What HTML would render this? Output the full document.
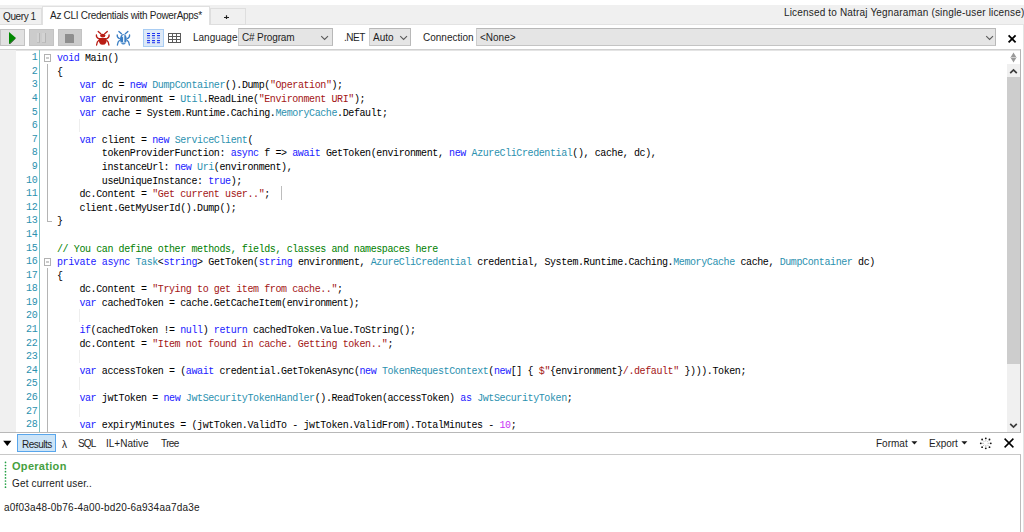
<!DOCTYPE html>
<html><head><meta charset="utf-8">
<style>
*{box-sizing:border-box;margin:0;padding:0}
html,body{width:1024px;height:532px;overflow:hidden;background:#fff;position:relative;font-family:"Liberation Sans",sans-serif;color:#000}
.a{position:absolute}
.ui{font-family:"Liberation Sans",sans-serif;font-size:10px;white-space:pre;line-height:12px;color:#1e1e1e}
#code{position:absolute;left:57px;top:52.2px;font-family:"Liberation Mono",monospace;font-size:10px;letter-spacing:-0.4px;line-height:13.6px;white-space:pre;color:#000}
#nums{position:absolute;left:16.3px;top:51.2px;width:21px;text-align:right;font-family:"Liberation Mono",monospace;font-size:10px;letter-spacing:-0.4px;line-height:13.6px;white-space:pre;color:#2b91af}
.k{color:#1a1aff}.t{color:#2b91af}.s{color:#a31515}.c{color:#008000}.n{color:#c832f5}
</style></head><body>
<!-- tab strip -->
<div class="a" style="left:0;top:5px;width:1024px;height:20px;background:#f0f0f0"></div>
<div class="a" style="left:0;top:24px;width:1024px;height:1px;background:#e3e3e3"></div>
<div class="a" style="left:-1px;top:8px;width:43px;height:17px;background:#f0f0f0;border:1px solid #dedede"></div>
<div class="a ui" style="left:3px;top:11px;letter-spacing:-0.4px">Query 1</div>
<div class="a" style="left:42px;top:6px;width:168px;height:19px;background:#fff;border:1px solid #e0e0e0;border-bottom:none"></div>
<div class="a ui" style="left:50px;top:10px;letter-spacing:-0.29px">Az CLI Credentials with PowerApps*</div>
<div class="a" style="left:210px;top:8px;width:36px;height:17px;background:#f0f0f0;border:1px solid #dedede"></div>
<svg class="a" style="left:223px;top:14px" width="7" height="6"><path d="M1 3.5H6M3.5 1.2V5" stroke="#202020" stroke-width="1.2"/></svg>
<div class="a ui" style="left:784px;top:7px;letter-spacing:0.17px">Licensed to Natraj Yegnaraman (single-user license)</div>

<!-- toolbar -->
<div class="a" style="left:0;top:29px;width:25px;height:17px;background:#e1e1e1;border:1px solid #c2c2c2"></div>
<svg class="a" style="left:9px;top:32px" width="8" height="12"><path d="M0 0 L7 6 L0 12Z" fill="#008800"/><path d="M0 12 L7 6 L6 7.2 L1 12Z" fill="#002800"/></svg>
<div class="a" style="left:29px;top:29px;width:25px;height:17px;background:#cccccc;border:1px solid #c3c3c3"></div>
<div class="a" style="left:37px;top:33px;width:3px;height:10px;background:#d3d3d3;border-right:1px solid #b5b5b5;border-bottom:1px solid #bdbdbd"></div>
<div class="a" style="left:42px;top:33px;width:4px;height:10px;background:#d3d3d3;border-right:1px solid #b5b5b5;border-bottom:1px solid #bdbdbd"></div>
<div class="a" style="left:58px;top:29px;width:24px;height:17px;background:#cccccc;border:1px solid #c3c3c3"></div>
<svg class="a" style="left:65px;top:34px" width="9" height="9"><path d="M0 0H8L9 1V9H0Z" fill="#8e8e8e"/></svg>
<!-- bugs -->
<svg class="a" style="left:95px;top:30px" width="16" height="17" viewBox="0 0 16 17">
<g stroke="#b91d15" stroke-width="1.3" fill="none" stroke-linecap="round"><path d="M3.2 1.4 L5.8 3.8"/><path d="M12.3 1.4 L9.7 3.8"/><path d="M1.4 5 Q1.2 7.6 3.6 8.6"/><path d="M14.1 5 Q14.3 7.6 11.9 8.6"/><path d="M3.6 10.5 Q2 11.5 1.6 15"/><path d="M11.9 10.5 Q13.5 11.5 13.9 15"/></g>
<ellipse cx="7.75" cy="5.6" rx="2.65" ry="1.95" fill="#b91d15"/>
<path d="M3.8 7.9 H11.7 Q12.3 14.8 7.75 14.8 Q3.2 14.8 3.8 7.9Z" fill="#b91d15"/></svg>
<svg class="a" style="left:116px;top:30px" width="16" height="17" viewBox="0 0 16 17">
<g stroke="#3a7ec4" stroke-width="1.3" fill="none" stroke-linecap="round"><path d="M2.9 1.4 L5.5 3.8"/><path d="M11.9 1.4 L9.3 3.8"/><path d="M1.2 5 Q1 7.6 3.4 8.6"/><path d="M13.6 5 Q13.8 7.6 11.4 8.6"/><path d="M3.4 10.5 Q1.8 11.5 1.4 15"/><path d="M11.4 10.5 Q13 11.5 13.4 15"/></g>
<ellipse cx="7.4" cy="9.3" rx="3.4" ry="5.3" fill="#3a7ec4"/>
<path d="M6.3 6.6 L7.7 5.6 V12.2" stroke="#f0f6fc" stroke-width="1.3" fill="none"/><path d="M4.6 12.7 H10.2" stroke="#d0e2f4" stroke-width="0.8"/></svg>
<!-- grid buttons -->
<div class="a" style="left:143px;top:29px;width:21px;height:18px;background:#dde9f7;border:1px solid #a9cdf3"></div>
<svg class="a" style="left:147px;top:33px" width="14" height="11"><g fill="#2034f0"><rect x="0" y="0" width="3" height="1"/><rect x="5" y="0" width="3" height="1"/><rect x="10" y="0" width="3" height="1"/><rect x="0" y="2" width="3" height="1.2"/><rect x="5" y="2" width="3" height="1.2"/><rect x="10" y="2" width="3" height="1.2"/><rect x="0" y="7" width="3" height="1.2"/><rect x="5" y="7" width="3" height="1.2"/><rect x="10" y="7" width="3" height="1.2"/><rect x="0" y="9.2" width="3" height="1"/><rect x="5" y="9.2" width="3" height="1"/><rect x="10" y="9.2" width="3" height="1"/></g><g fill="#8595ee"><rect x="0" y="4.3" width="3" height="1.6"/><rect x="5" y="4.3" width="3" height="1.6"/><rect x="10" y="4.3" width="3" height="1.6"/></g></svg>
<svg class="a" style="left:168px;top:33px" width="13" height="10"><g fill="#5a5a5a"><rect x="0" y="0" width="13" height="1"/><rect x="0" y="3" width="13" height="1"/><rect x="0" y="6" width="13" height="1"/><rect x="0" y="9" width="13" height="1"/><rect x="0" y="0" width="1" height="10"/><rect x="4" y="0" width="1" height="10"/><rect x="8" y="0" width="1" height="10"/><rect x="12" y="0" width="1" height="10"/></g></svg>
<div class="a ui" style="left:193px;top:32px">Language</div>
<div class="a" style="left:238px;top:28px;width:95px;height:18px;background:#e5e5e5;border:1px solid #b8b8b8;border-left-color:#cdcdcd;border-bottom-color:#c4c4c4"></div>
<div class="a ui" style="left:242px;top:32px;letter-spacing:-0.15px">C# Program</div>
<svg class="a" style="left:320px;top:35px" width="10" height="6"><path d="M1.2 1.2 L4.6 4.5 L8 1.2" stroke="#5a5a5a" stroke-width="1.1" fill="none"/></svg>
<div class="a ui" style="left:344px;top:32px;letter-spacing:-0.5px">.NET</div>
<div class="a" style="left:369px;top:28px;width:42px;height:18px;background:#e5e5e5;border:1px solid #b8b8b8;border-left-color:#cdcdcd;border-bottom-color:#c4c4c4"></div>
<div class="a ui" style="left:373px;top:32px">Auto</div>
<svg class="a" style="left:399px;top:35px" width="10" height="6"><path d="M1.2 1.2 L4.6 4.5 L8 1.2" stroke="#5a5a5a" stroke-width="1.1" fill="none"/></svg>
<div class="a ui" style="left:423px;top:32px">Connection</div>
<div class="a" style="left:476px;top:28px;width:520px;height:18px;background:#e5e5e5;border:1px solid #b8b8b8;border-left-color:#cdcdcd;border-bottom-color:#c4c4c4"></div>
<div class="a ui" style="left:480px;top:32px">&lt;None&gt;</div>
<svg class="a" style="left:984.5px;top:35px" width="10" height="6"><path d="M1.2 1.2 L4.6 4.5 L8 1.2" stroke="#5a5a5a" stroke-width="1.1" fill="none"/></svg>
<svg class="a" style="left:1007px;top:34px" width="10" height="10"><path d="M1.6 1.4 L8.6 8.4 M8.6 1.4 L1.6 8.4" stroke="#000" stroke-width="1.8"/></svg>

<!-- editor -->
<div class="a" style="left:0;top:49px;width:1021px;height:384px;border-top:1px solid #d0d0d0;border-right:1px solid #b4b4b4;border-bottom:1px solid #b8b8b8"></div><div class="a" style="left:0;top:50px;width:1020px;height:1px;background:#e4e4e4"></div><div class="a" style="left:1023px;top:25px;width:1px;height:507px;background:#e4e4e4"></div>
<div class="a" style="left:0;top:50px;width:16px;height:382px;background:#f0f0f0"></div>
<div class="a" style="left:39px;top:50px;width:1px;height:382px;background:#7cc3c6"></div>
<div id="nums">1
2
3
4
5
6
7
8
9
10
11
12
13
14
15
16
17
18
19
20
21
22
23
24
25
26
27
28</div>
<!-- fold markers -->
<div class="a" style="left:44px;top:54px;width:7px;height:8px;border:1px solid #b2b2b2;background:#fff"></div>
<div class="a" style="left:46px;top:57px;width:3px;height:2px;background:#cccccc"></div>
<div class="a" style="left:47px;top:64px;width:1px;height:158px;background:#b4b4b4"></div>
<div class="a" style="left:47px;top:221px;width:5px;height:1px;background:#b4b4b4"></div>
<div class="a" style="left:44px;top:258px;width:7px;height:8px;border:1px solid #b2b2b2;background:#fff"></div>
<div class="a" style="left:46px;top:261px;width:3px;height:2px;background:#cccccc"></div>
<div class="a" style="left:47px;top:268px;width:1px;height:164px;background:#b4b4b4"></div>
<!-- indent guides on empty lines -->
<div class="a" style="left:79px;top:119px;width:1px;height:13px;background:#eeeeee"></div>
<div class="a" style="left:79px;top:309px;width:1px;height:13px;background:#eeeeee"></div>
<div class="a" style="left:79px;top:350px;width:1px;height:13px;background:#eeeeee"></div>
<div class="a" style="left:79px;top:377px;width:1px;height:13px;background:#eeeeee"></div>
<div class="a" style="left:79px;top:404px;width:1px;height:13px;background:#eeeeee"></div>
<div id="code"><span class="k">void</span> Main()
{
    <span class="k">var</span> dc = <span class="k">new</span> <span class="t">DumpContainer</span>().Dump(<span class="s">"Operation"</span>);
    <span class="k">var</span> environment = <span class="t">Util</span>.ReadLine(<span class="s">"Environment URI"</span>);
    <span class="k">var</span> cache = System.Runtime.Caching.<span class="t">MemoryCache</span>.Default;

    <span class="k">var</span> client = <span class="k">new</span> <span class="t">ServiceClient</span>(
        tokenProviderFunction: <span class="k">async</span> f =&gt; <span class="k">await</span> GetToken(environment, <span class="k">new</span> <span class="t">AzureCliCredential</span>(), cache, dc),
        instanceUrl: <span class="k">new</span> <span class="t">Uri</span>(environment),
        useUniqueInstance: <span class="k">true</span>);
    dc.Content = <span class="s">"Get current user.."</span>;
    client.GetMyUserId().Dump();
}

<span class="c">// You can define other methods, fields, classes and namespaces here</span>
<span class="k">private</span> <span class="k">async</span> <span class="t">Task</span>&lt;<span class="k">string</span>&gt; GetToken(<span class="k">string</span> environment, <span class="t">AzureCliCredential</span> credential, System.Runtime.Caching.<span class="t">MemoryCache</span> cache, <span class="t">DumpContainer</span> dc)
{
    dc.Content = <span class="s">"Trying to get item from cache.."</span>;
    <span class="k">var</span> cachedToken = cache.GetCacheItem(environment);

    <span class="k">if</span>(cachedToken != <span class="k">null</span>) <span class="k">return</span> cachedToken.Value.ToString();
    dc.Content = <span class="s">"Item not found in cache. Getting token.."</span>;

    <span class="k">var</span> accessToken = (<span class="k">await</span> credential.GetTokenAsync(<span class="k">new</span> <span class="t">TokenRequestContext</span>(<span class="k">new</span>[] { <span class="s">$"</span>{environment}<span class="s">/.default"</span> }))).Token;

    <span class="k">var</span> jwtToken = <span class="k">new</span> <span class="t">JwtSecurityTokenHandler</span>().ReadToken(accessToken) <span class="k">as</span> <span class="t">JwtSecurityToken</span>;

    <span class="k">var</span> expiryMinutes = (jwtToken.ValidTo - jwtToken.ValidFrom).TotalMinutes - <span class="n">10</span>;</div>
<!-- cursor -->
<div class="a" style="left:281px;top:186px;width:1px;height:14px;background:#bdbdbd"></div>
<!-- scrollbar -->
<svg class="a" style="left:1010px;top:52px" width="7" height="11"><path d="M3.5 0.5 L6.5 5.5 L3.5 10.5 L0.5 5.5Z" fill="#9a9a9a"/><path d="M0.5 5.5H6.5" stroke="#d0d0d0" stroke-width="1"/></svg>
<div class="a" style="left:1007px;top:64px;width:13px;height:368px;background:#f0f0f0"></div>
<svg class="a" style="left:1009px;top:68px" width="9" height="7"><path d="M1.2 5.2 L4.5 1.9 L7.8 5.2" stroke="#3c3c3c" stroke-width="1.7" fill="none"/></svg>
<div class="a" style="left:1007px;top:77px;width:13px;height:287px;background:#cdcdcd"></div>
<svg class="a" style="left:1009px;top:422px" width="9" height="7"><path d="M1.2 1.8 L4.5 5.1 L7.8 1.8" stroke="#3c3c3c" stroke-width="1.7" fill="none"/></svg>

<!-- results toolbar -->
<svg class="a" style="left:3px;top:440px" width="9" height="7"><path d="M0.2 0.7 H8.4 L4.3 6Z" fill="#000"/></svg>
<div class="a" style="left:17px;top:434px;width:39px;height:18px;background:#cce4f7;border:1px solid #58a6ec"></div>
<div class="a ui" style="left:22px;top:438.5px;letter-spacing:-0.5px">Results</div>
<div class="a ui" style="left:62px;top:439px">λ</div>
<div class="a ui" style="left:78px;top:438px;letter-spacing:-0.9px">SQL</div>
<div class="a ui" style="left:106px;top:438px">IL+Native</div>
<div class="a ui" style="left:161px;top:438px;letter-spacing:-0.6px">Tree</div>
<div class="a ui" style="left:876px;top:438px">Format</div>
<svg class="a" style="left:911px;top:441px" width="7" height="4"><path d="M0.4 0.3H6.4L3.4 3.6Z" fill="#1a1a1a"/></svg>
<div class="a ui" style="left:929px;top:438px">Export</div>
<svg class="a" style="left:961px;top:441px" width="7" height="4"><path d="M0.4 0.3H6.4L3.4 3.6Z" fill="#1a1a1a"/></svg>
<svg class="a" style="left:979px;top:436px" width="14" height="15" viewBox="0 0 14 15"><g stroke="#b0b0b0" stroke-width="0.8"><path d="M6.8 3.5V5.5M6.8 9V11M3 7.3H5M8.6 7.3H10.6M4.1 4.6L5.3 5.8M9.5 4.6L8.3 5.8M4.1 10L5.3 8.8M9.5 10L8.3 8.8"/></g><g fill="#111"><circle cx="6.8" cy="2.3" r="0.9"/><circle cx="6.8" cy="12.3" r="0.9"/><circle cx="1.8" cy="7.3" r="0.9"/><circle cx="11.8" cy="7.3" r="0.9"/><circle cx="3.1" cy="3.5" r="0.9"/><circle cx="10.5" cy="3.5" r="0.9"/><circle cx="3.1" cy="11.2" r="0.9"/><circle cx="10.5" cy="11.2" r="0.9"/></g></svg>
<svg class="a" style="left:1003px;top:437px" width="12" height="12"><path d="M1.6 1.6 L10.4 10.4 M10.4 1.6 L1.6 10.4" stroke="#000" stroke-width="1.5"/></svg>

<!-- results pane -->
<div class="a" style="left:0;top:454px;width:1021px;height:80px;border-top:1px solid #c8c8c8;border-right:1px solid #bcbcbc"></div>
<svg class="a" style="left:4px;top:461px" width="3" height="29"><g fill="#22a044"><circle cx="1.5" cy="1.40" r="0.85"/><circle cx="1.5" cy="4.50" r="0.85"/><circle cx="1.5" cy="7.60" r="0.85"/><circle cx="1.5" cy="10.70" r="0.85"/><circle cx="1.5" cy="13.80" r="0.85"/><circle cx="1.5" cy="16.90" r="0.85"/><circle cx="1.5" cy="20.00" r="0.85"/><circle cx="1.5" cy="23.10" r="0.85"/><circle cx="1.5" cy="26.20" r="0.85"/></g></svg>
<div class="a ui" style="left:12px;top:460px;font-weight:bold;color:#46a040;font-size:11px;letter-spacing:0.3px">Operation</div>
<div class="a ui" style="left:12px;top:478px;color:#202020;letter-spacing:0.15px">Get current user..</div>
<div class="a ui" style="left:4px;top:502px;color:#202020;letter-spacing:0.2px">a0f03a48-0b76-4a00-bd20-6a934aa7da3e</div>
</body></html>
